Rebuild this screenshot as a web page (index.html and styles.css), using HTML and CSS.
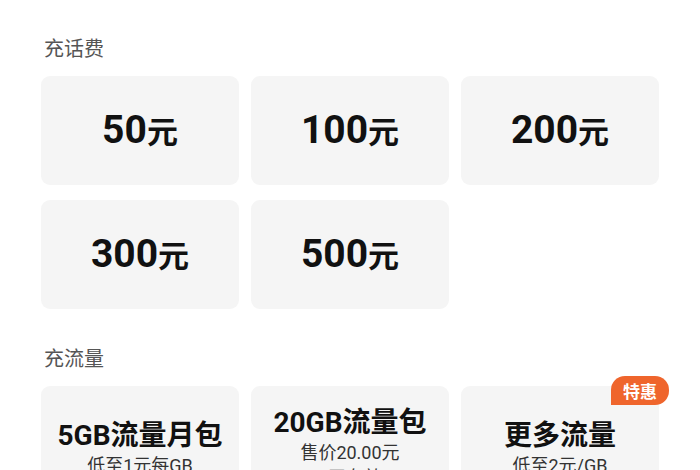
FILE: index.html
```html
<!DOCTYPE html>
<html lang="zh-CN">
<head>
<meta charset="utf-8">
<title>充值</title>
<link rel="stylesheet" href="styles.css">
</head>
<body>
<div class="page">
  <div class="section-title first">充话费</div>
  <div class="grid">
    <div class="card amount"><span class="num">50</span><span class="unit">元</span></div>
    <div class="card amount"><span class="num">100</span><span class="unit">元</span></div>
    <div class="card amount"><span class="num">200</span><span class="unit">元</span></div>
    <div class="card amount"><span class="num">300</span><span class="unit">元</span></div>
    <div class="card amount"><span class="num">500</span><span class="unit">元</span></div>
  </div>
  <div class="section-title">充流量</div>
  <div class="grid">
    <div class="card data">
      <div class="data-name">5GB流量月包</div>
      <div class="data-sub">低至1元每GB</div>
    </div>
    <div class="card data">
      <div class="data-name">20GB流量包</div>
      <div class="data-sub">售价20.00元</div>
      <div class="data-sub">7天有效</div>
    </div>
    <div class="card data">
      <span class="badge">特惠</span>
      <div class="data-name">更多流量</div>
      <div class="data-sub">低至2元/GB</div>
    </div>
  </div>
</div>
</body>
</html>
```

FILE: styles.css
```css
html, body {
  margin: 0;
  padding: 0;
  background: #ffffff;
}
body {
  font-family: Roboto, "Noto Sans CJK SC", sans-serif;
  color: #111111;
  overflow: hidden;
}
.page {
  padding: 0 41px;
  width: 618px;
}
.section-title {
  font-family: "Noto Sans CJK SC", sans-serif;
  font-size: 20px;
  line-height: 28px;
  color: #555555;
  padding-left: 3px;
  margin-top: 35px;
  margin-bottom: 14px;
}
.section-title.first {
  margin-top: 34px;
}
.grid {
  display: grid;
  grid-template-columns: repeat(3, 1fr);
  column-gap: 12px;
  row-gap: 15px;
}
.card {
  position: relative;
  background: #f5f5f5;
  border-radius: 9px;
  display: flex;
  flex-direction: column;
  align-items: center;
  justify-content: center;
}
.amount {
  height: 109px;
  flex-direction: row;
  align-items: baseline;
}
.amount .num {
  font-family: Roboto, sans-serif;
  font-weight: 700;
  font-size: 39px;
  line-height: 109px;
}
.amount .unit {
  font-family: "Noto Sans CJK SC", sans-serif;
  font-weight: 700;
  font-size: 31px;
}
.data {
  height: 124px;
}
.data-name {
  font-weight: 700;
  font-size: 28px;
  line-height: 34px;
}
.data-sub {
  font-size: 18px;
  line-height: 24px;
  color: #333333;
  margin-top: 1px;
}
.badge {
  position: absolute;
  top: -10px;
  right: -10px;
  width: 58px;
  height: 29px;
  line-height: 29px;
  text-align: center;
  background: #ef652c;
  color: #ffffff;
  font-family: "Noto Sans CJK SC", sans-serif;
  font-weight: 700;
  font-size: 17px;
  border-radius: 14px 14px 14px 0;
}
```
